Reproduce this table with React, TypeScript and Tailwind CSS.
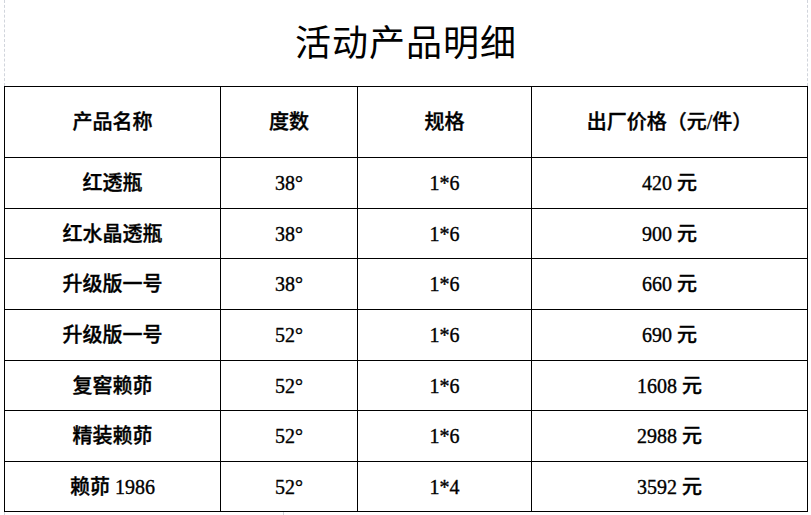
const rows = [
  { name: "红透瓶", degree: "38°", spec: "1*6", price: "420 元", h: "h-[51px]" },
  { name: "红水晶透瓶", degree: "38°", spec: "1*6", price: "900 元", h: "h-[50px]" },
  { name: "升级版一号", degree: "38°", spec: "1*6", price: "660 元", h: "h-[51px]" },
  { name: "升级版一号", degree: "52°", spec: "1*6", price: "690 元", h: "h-[51px]" },
  { name: "复窖赖茆", degree: "52°", spec: "1*6", price: "1608 元", h: "h-[50px]" },
  { name: "精装赖茆", degree: "52°", spec: "1*6", price: "2988 元", h: "h-[51px]" },
  { name: "赖茆 1986", degree: "52°", spec: "1*4", price: "3592 元", h: "h-[50px]" },
];

const cell = "border border-black text-center align-middle p-0";

export default function App() {
  return (
    <div className="w-[811px] h-[515px] bg-white overflow-hidden text-black">
      <div className="ml-[4px] w-[804px] h-[86px] border-x border-dashed border-gray-300 flex items-center justify-center">
        <h1 className="text-[36px] leading-none font-normal pb-[6px] font-['Noto_Sans_CJK_SC',sans-serif] tracking-[1px]">
          活动产品明细
        </h1>
      </div>
      <table className="ml-[4px] w-[803px] border-collapse table-fixed font-['Liberation_Serif','Noto_Sans_CJK_SC',serif] text-[20px] font-medium [-webkit-text-stroke:0.35px_black]">
        <colgroup>
          <col className="w-[216px]" />
          <col className="w-[137px]" />
          <col className="w-[174px]" />
          <col className="w-[276px]" />
        </colgroup>
        <thead>
          <tr className="h-[71px]">
            <th className={`${cell} font-medium`}>产品名称</th>
            <th className={`${cell} font-medium`}>度数</th>
            <th className={`${cell} font-medium`}>规格</th>
            <th className={`${cell} font-medium`}>出厂价格（元/件）</th>
          </tr>
        </thead>
        <tbody>
          {rows.map((r, i) => (
            <tr key={i} className={r.h}>
              <td className={cell}>{r.name}</td>
              <td className={cell}>{r.degree}</td>
              <td className={cell}>{r.spec}</td>
              <td className={cell}>{r.price}</td>
            </tr>
          ))}
        </tbody>
      </table>
      <div className="flex h-[4px]">
        <div className="ml-[4px] w-[279px] border-l border-dashed border-gray-300" />
        <div className="border-l border-dashed border-gray-300" />
      </div>
    </div>
  );
}
